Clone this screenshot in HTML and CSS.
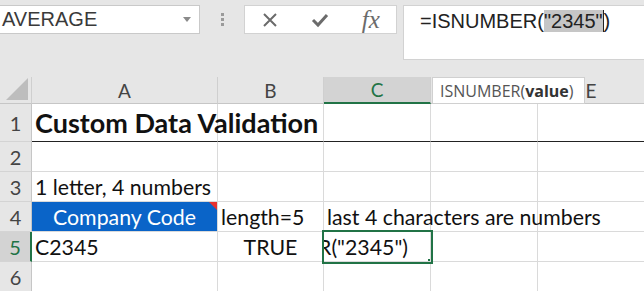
FILE: index.html
```html
<!DOCTYPE html>
<html lang="en">
<head>
    <meta charset="UTF-8">
    <title>Custom Data Validation</title>
    <link rel="stylesheet" href="styles.css">
</head>
<body>
    <div class="topbar">
        <div class="namebox">
            <span>AVERAGE</span>
            <span class="caret"></span>
        </div>
        <div class="grip"><i></i><i></i><i></i></div>
        <div class="fx-buttons">
            <span class="btn"><svg width="16" height="16" viewBox="0 0 16 16"><path d="M2 2 L14 14 M14 2 L2 14" stroke="#6b6b6b" stroke-width="2" fill="none"/></svg></span>
            <span class="btn"><svg width="18" height="16" viewBox="0 0 18 16"><path d="M2 8 L7 13 L16 3" stroke="#6b6b6b" stroke-width="3" fill="none"/></svg></span>
            <span class="btn fx">fx</span>
        </div>
        <div class="formula">=ISNUMBER(<span class="sel">"2345"</span><span class="cursor"></span>)</div>
    </div>

    <div class="sheet">
        <div class="hdr corner"><span class="tri"></span></div>
        <div class="hdr">A</div>
        <div class="hdr">B</div>
        <div class="hdr active-col">C</div>
        <div class="hdr">D</div>
        <div class="hdr">E</div>

        <div class="rh">1</div>
        <div class="cell title">Custom Data Validation</div>
        <div class="cell title-line"></div>
        <div class="cell title-line"></div>
        <div class="cell title-line"></div>
        <div class="cell title-line"></div>

        <div class="rh">2</div>
        <div class="cell"></div>
        <div class="cell"></div>
        <div class="cell"></div>
        <div class="cell"></div>
        <div class="cell"></div>

        <div class="rh">3</div>
        <div class="cell overflow">1 letter, 4 numbers</div>
        <div class="cell"></div>
        <div class="cell"></div>
        <div class="cell"></div>
        <div class="cell"></div>

        <div class="rh">4</div>
        <div class="cell code">Company Code<span class="note"></span></div>
        <div class="cell">length=5</div>
        <div class="cell overflow">last 4 characters are numbers</div>
        <div class="cell"></div>
        <div class="cell"></div>

        <div class="rh active-row">5</div>
        <div class="cell">C2345</div>
        <div class="cell center">TRUE</div>
        <div class="cell editing"><span>=ISNUMBER("2345")</span></div>
        <div class="cell"></div>
        <div class="cell"></div>

        <div class="rh">6</div>
        <div class="cell"></div>
        <div class="cell"></div>
        <div class="cell"></div>
        <div class="cell"></div>
        <div class="cell"></div>

        <div class="tooltip">ISNUMBER(<b>value</b>)</div>
    </div>
</body>
</html>
```

FILE: styles.css
```css
body {
    margin: 0;
    width: 644px;
    height: 291px;
    overflow: hidden;
    background-color: #e6e6e6;
    font-family: "Liberation Sans", Arial, sans-serif;
}
.topbar {
    height: 77px;
    display: flex;
    align-items: flex-start;
    padding-top: 5px;
    box-sizing: border-box;
}
.namebox {
    width: 200px;
    height: 29px;
    box-sizing: border-box;
    background-color: #ffffff;
    border: 1px solid #c9c9c9;
    border-left: none;
    display: flex;
    align-items: center;
    justify-content: space-between;
    padding: 0 8px 0 2px;
    font-size: 20px;
    color: #3a3a3a;
}
.caret {
    width: 0;
    height: 0;
    border-left: 4px solid transparent;
    border-right: 4px solid transparent;
    border-top: 5px solid #8a8a8a;
}
.grip {
    width: 44px;
    height: 29px;
    display: flex;
    flex-direction: column;
    justify-content: center;
    align-items: center;
    gap: 2px;
}
.grip i {
    width: 3px;
    height: 3px;
    background-color: #9a9a9a;
}
.fx-buttons {
    width: 153px;
    height: 29px;
    box-sizing: border-box;
    background-color: #ffffff;
    border: 1px solid #d2d2d2;
    display: flex;
    align-items: center;
}
.btn {
    width: 51px;
    display: flex;
    justify-content: center;
}
.fx {
    font-family: "Liberation Serif", serif;
    font-style: italic;
    font-size: 25px;
    color: #6b6b6b;
}
.formula {
    margin-left: 6px;
    flex: 1;
    height: 55px;
    box-sizing: border-box;
    background-color: #ffffff;
    border: 1px solid #d2d2d2;
    border-right: none;
    padding: 2px 0 0 16px;
    font-size: 20px;
    line-height: 26px;
    color: #222;
}
.formula .sel {
    background-color: #c6c6c6;
}
.cursor {
    display: inline-block;
    width: 1px;
    height: 22px;
    vertical-align: -4px;
    background-color: #222;
}
.sheet {
    position: relative;
    display: grid;
    grid-template-columns: 32px 186px 106px 107px 107px 107px;
    grid-template-rows: 27px 38px 30px 30px 30px 30px 30px;
    background-color: #ffffff;
    font-family: Lato, "Open Sans", sans-serif;
}
.hdr {
    background-color: #e6e6e6;
    border-right: 1px solid #cfcfcf;
    border-bottom: 1px solid #c6c6c6;
    display: flex;
    align-items: center;
    justify-content: center;
    font-size: 19px;
    color: #444;
}
.corner {
    position: relative;
}
.tri {
    position: absolute;
    right: 3px;
    bottom: 3px;
    width: 0;
    height: 0;
    border-left: 22px solid transparent;
    border-bottom: 22px solid #bdbdbd;
}
.active-col {
    background-color: #d3d3d3;
    border-bottom: 2px solid #217346;
    color: #217346;
}
.rh {
    background-color: #e6e6e6;
    border-right: 1px solid #c6c6c6;
    border-bottom: 1px solid #d4d4d4;
    display: flex;
    align-items: center;
    justify-content: center;
    font-size: 20px;
    color: #444;
}
.active-row {
    background-color: #d3d3d3;
    border-right: 2px solid #217346;
    color: #217346;
}
.cell {
    border-right: 1px solid #dadada;
    border-bottom: 1px solid #dadada;
    display: flex;
    align-items: center;
    padding: 0 3px;
    font-size: 21.3px;
    color: #111;
    white-space: nowrap;
    min-width: 0;
}
.overflow {
    overflow: visible;
    position: relative;
    z-index: 1;
}
.center {
    justify-content: center;
}
.title {
    font-weight: bold;
    font-size: 27px;
    border-bottom: 1px solid #222;
    overflow: visible;
    position: relative;
    z-index: 1;
}
.title-line {
    border-bottom: 1px solid #222;
}
.code {
    position: relative;
    justify-content: center;
    background-color: #0a64c8;
    color: #ffffff;
}
.note {
    position: absolute;
    top: 0;
    right: 0;
    width: 0;
    height: 0;
    border-left: 8px solid transparent;
    border-top: 8px solid #e8312f;
}
.editing {
    position: relative;
    z-index: 2;
    outline: 2px solid #217346;
    outline-offset: 0;
    overflow: hidden;
    justify-content: flex-end;
    padding-right: 22px;
}
.editing::after {
    content: "";
    position: absolute;
    right: -4px;
    bottom: -4px;
    width: 5px;
    height: 5px;
    background-color: #217346;
    border: 1px solid #ffffff;
}
.tooltip {
    position: absolute;
    left: 432px;
    top: 0;
    width: 153px;
    height: 27px;
    box-sizing: border-box;
    background-color: #ffffff;
    border: 1px solid #d0d0d0;
    display: flex;
    align-items: center;
    padding-left: 7px;
    font-family: "Open Sans", sans-serif;
    font-size: 16px;
    color: #555;
    z-index: 3;
}
.tooltip b {
    color: #333;
}
```
